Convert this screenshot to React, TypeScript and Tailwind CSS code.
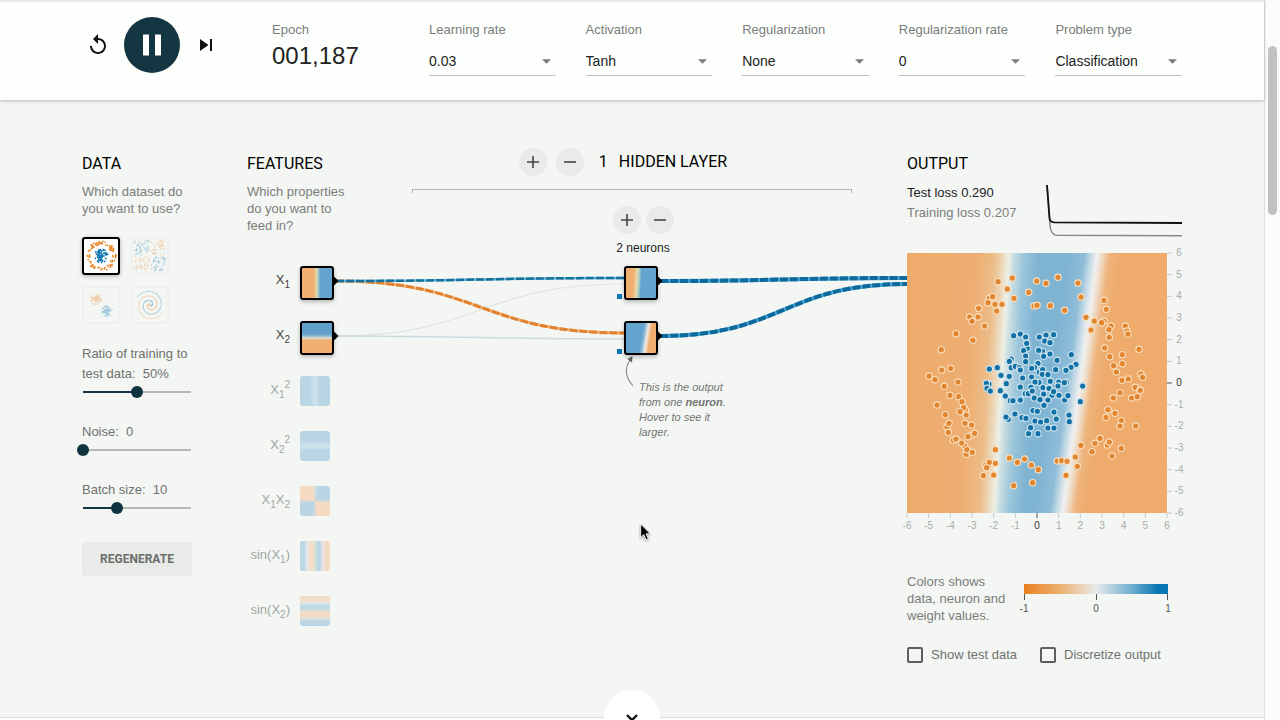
import React, { useState } from "react";

type Point = [number, number];

const ORANGE = "#e8872b";
const BLUE = "#0b75b1";

/* ---------- Header ---------- */

function Picker({ label, options }: { label: string; options: string[] }) {
  return (
    <label className="block min-w-0">
      <span className="block text-[13px] leading-5 text-[#7b7d7b]">{label}</span>
      <span className="relative mt-2 block">
        <select className="block h-[28px] w-full appearance-none rounded-none border-b border-[#bfc2bf] bg-transparent text-[14px] text-[#222] outline-none">
          {options.map((o) => (
            <option key={o}>{o}</option>
          ))}
        </select>
        <svg viewBox="0 0 10 5" className="pointer-events-none absolute top-[11px] right-[5px] h-[5px] w-[9px]">
          <path d="M0 0h10L5 5z" fill="#7b7d7b" />
        </svg>
      </span>
    </label>
  );
}

function Header() {
  return (
    <header className="relative z-10 h-[100px] shrink-0 border-t-2 border-[#e6e9e6] bg-[#fcfffc] shadow-[0_1px_3px_rgba(0,0,0,0.25)]">
      <div className="mx-auto flex max-w-[1100px]">
        <div className="mt-[15px] ml-1 flex h-14 w-[186px] shrink-0 items-center">
          <button aria-label="Reset" className="mr-[14px]">
            <svg viewBox="0 0 24 24" className="h-6 w-6" fill="#111">
              <path d="M12 5V1L7 6l5 5V7c3.31 0 6 2.69 6 6s-2.69 6-6 6-6-2.69-6-6H4c0 4.42 3.58 8 8 8s8-3.58 8-8-3.58-8-8-8z" />
            </svg>
          </button>
          <button aria-label="Pause" className="flex h-14 w-14 items-center justify-center rounded-full bg-[#143642]">
            <svg viewBox="0 0 24 24" className="h-9 w-9" fill="#fff">
              <path d="M6 19h4V5H6v14zm8-14v14h4V5h-4z" />
            </svg>
          </button>
          <button aria-label="Step" className="ml-[14px]">
            <svg viewBox="0 0 24 24" className="h-6 w-6" fill="#111">
              <path d="M6 18l8.5-6L6 6v12zM16 6v12h2V6h-2z" />
            </svg>
          </button>
        </div>
        <div className="mt-[18px] w-[157px] shrink-0">
          <div className="text-[13px] leading-5 text-[#7b7d7b]">Epoch</div>
          <div className="text-[24px] leading-8 text-[#222]">001,187</div>
        </div>
        <div className="mt-[18px] grid flex-1 grid-cols-5 gap-[30px]">
          <Picker label="Learning rate" options={["0.03", "0.1", "0.3"]} />
          <Picker label="Activation" options={["Tanh", "ReLU", "Sigmoid", "Linear"]} />
          <Picker label="Regularization" options={["None", "L1", "L2"]} />
          <Picker label="Regularization rate" options={["0", "0.001", "0.01"]} />
          <Picker label="Problem type" options={["Classification", "Regression"]} />
        </div>
      </div>
    </header>
  );
}

/* ---------- Data column ---------- */

function makeRandom(seed: number) {
  let s = seed;
  return () => {
    s = (s * 16807) % 2147483647;
    return s / 2147483647;
  };
}

type Dot = { x: number; y: number; c: string };

function circleDots(): Dot[] {
  const r = makeRandom(7);
  const out: Dot[] = [];
  for (let i = 0; i < 90; i++) {
    const a = r() * Math.PI * 2;
    const d = 11 + r() * 4;
    out.push({ x: 17 + Math.cos(a) * d, y: 17 + Math.sin(a) * d, c: ORANGE });
  }
  for (let i = 0; i < 75; i++) {
    const a = r() * Math.PI * 2;
    const d = r() * 7;
    out.push({ x: 17 + Math.cos(a) * d, y: 17 + Math.sin(a) * d, c: BLUE });
  }
  return out;
}

function xorDots(): Dot[] {
  const r = makeRandom(31);
  return Array.from({ length: 180 }, () => {
    const x = (r() - 0.5) * 29;
    const y = (r() - 0.5) * 29;
    return { x: 17 + x + Math.sign(x), y: 17 + y + Math.sign(y), c: x * y > 0 ? BLUE : ORANGE };
  });
}

function gaussDots(): Dot[] {
  const r = makeRandom(99);
  return Array.from({ length: 120 }, (_, i) => {
    const a = r() * Math.PI * 2;
    const d = r() * 5.5;
    const blue = i % 2 === 0;
    return {
      x: (blue ? 23 : 12) + Math.cos(a) * d,
      y: (blue ? 23 : 11) + Math.sin(a) * d,
      c: blue ? BLUE : ORANGE,
    };
  });
}

function spiralDots(): Dot[] {
  return Array.from({ length: 200 }, (_, i) => {
    const t = (i % 100) / 100;
    const blue = i < 100;
    const a = t * 10.5 + (blue ? 0 : Math.PI);
    return { x: 17 + Math.sin(a) * t * 15, y: 17 + Math.cos(a) * t * 15, c: blue ? BLUE : ORANGE };
  });
}

const DATASETS = [
  { name: "Circle", dots: circleDots(), size: 0.9 },
  { name: "Exclusive or", dots: xorDots(), size: 0.7 },
  { name: "Gaussian", dots: gaussDots(), size: 0.8 },
  { name: "Spiral", dots: spiralDots(), size: 0.6 },
];

function DatasetThumb({
  name,
  dots,
  size,
  active,
}: {
  name: string;
  dots: Dot[];
  size: number;
  active: boolean;
}) {
  return (
    <button
      aria-label={name}
      className={
        active
          ? "h-[38px] w-[38px] rounded-[3px] border-2 border-black bg-white shadow-[0_1px_4px_rgba(0,0,0,0.3)]"
          : "h-[38px] w-[38px] rounded-[3px] border-2 border-[#e6e9e6] opacity-35"
      }
    >
      <svg viewBox="0 0 34 34" className="h-[34px] w-[34px]">
        {dots.map((d, i) => (
          <circle key={i} cx={d.x} cy={d.y} r={size} fill={d.c} />
        ))}
      </svg>
    </button>
  );
}

function Slider({
  label,
  min,
  max,
  start,
  suffix = "",
}: {
  label: string;
  min: number;
  max: number;
  start: number;
  suffix?: string;
}) {
  const [value, setValue] = useState(start);
  const fill = `${((value - min) / (max - min)) * 100}%`;
  return (
    <label className="block text-[13px] leading-5 text-[#6f726f]">
      <span>{`${label}:\u00a0 ${value}${suffix}`}</span>
      <input
        type="range"
        min={min}
        max={max}
        value={value}
        onChange={(e) => setValue(Number(e.target.value))}
        style={{ "--fill": fill } as React.CSSProperties}
        className="-ml-[5px] block h-4 w-[calc(100%+10px)] appearance-none bg-transparent [&::-webkit-slider-runnable-track]:h-[2px] [&::-webkit-slider-runnable-track]:bg-[linear-gradient(to_right,transparent_6px,#143642_6px,#143642_var(--fill),#b4b7b4_var(--fill),#b4b7b4_calc(100%-6px),transparent_calc(100%-6px))] [&::-webkit-slider-thumb]:-mt-[5px] [&::-webkit-slider-thumb]:h-3 [&::-webkit-slider-thumb]:w-3 [&::-webkit-slider-thumb]:appearance-none [&::-webkit-slider-thumb]:rounded-full [&::-webkit-slider-thumb]:bg-[#0f3440]"
      />
    </label>
  );
}

function Title({ children }: { children: React.ReactNode }) {
  return <h2 className="font-[Roboto,sans-serif] text-[16px] leading-[22px] text-black">{children}</h2>;
}

function DataColumn() {
  return (
    <section className="pt-[6px]">
      <Title>DATA</Title>
      <p className="mt-2 text-[13px] leading-[17px] whitespace-nowrap text-[#7b7d7b]">
        Which dataset do
        <br />
        you want to use?
      </p>
      <div className="mt-5 grid grid-cols-[38px_38px] gap-[11px]">
        {DATASETS.map((d, i) => (
          <DatasetThumb key={d.name} name={d.name} dots={d.dots} size={d.size} active={i === 0} />
        ))}
      </div>
      <div className="mt-5 flex flex-col gap-[22px]">
        <Slider label="Ratio of training to test data" min={10} max={90} start={50} suffix="%" />
        <Slider label="Noise" min={0} max={50} start={0} />
        <Slider label="Batch size" min={1} max={30} start={10} />
      </div>
      <button className="mt-[26px] h-[34px] w-full rounded-[2px] bg-[#e8ebe8] font-[Roboto,sans-serif] text-[12px] font-bold text-[#6b6e6b]">
        REGENERATE
      </button>
    </section>
  );
}

/* ---------- Features column ---------- */

function FeatureRow({
  label,
  active = false,
  fill,
}: {
  label: React.ReactNode;
  active?: boolean;
  fill: string;
}) {
  return (
    <li className="flex h-[55px] items-start gap-[10px]">
      <span
        className={
          active
            ? "w-[43px] pt-1 text-right text-[13px] leading-5 whitespace-nowrap text-[#444]"
            : "w-[43px] pt-1 text-right text-[13px] leading-5 whitespace-nowrap text-[#a3a6a3]"
        }
      >
        {label}
      </span>
      <span
        className={
          active
            ? `h-[34px] w-[34px] shrink-0 rounded-[3px] border-2 border-black shadow-[0_2px_4px_rgba(0,0,0,0.25)] ${fill}`
            : `h-[30px] w-[30px] shrink-0 overflow-hidden rounded-[3px] ${fill}`
        }
      />
    </li>
  );
}

function Sub({ n }: { n: number }) {
  return <span className="relative top-1 text-[10px] leading-none">{n}</span>;
}

function Sup() {
  return <span className="relative -top-[6px] text-[10px] leading-none">2</span>;
}

function FeaturesColumn() {
  return (
    <section className="pt-[6px]">
      <Title>FEATURES</Title>
      <p className="mt-2 text-[13px] leading-[17px] whitespace-nowrap text-[#7b7d7b]">
        Which properties
        <br />
        do you want to
        <br />
        feed in?
      </p>
      <ul className="mt-8">
        <FeatureRow
          active
          label={<>X<Sub n={1} /></>}
          fill="bg-[linear-gradient(to_right,#f0ae70_38%,#dcdcb0_50%,#8fbdc4_56%,#64a5cf_62%)]"
        />
        <FeatureRow
          active
          label={<>X<Sub n={2} /></>}
          fill="bg-[linear-gradient(to_bottom,#5f9fca_35%,#8fbdd4_44%,#e6dccb_50%,#f0ae70_58%)]"
        />
        <FeatureRow
          label={<>X<Sub n={1} /><Sup /></>}
          fill="bg-[linear-gradient(to_right,#bad6e5_35%,#cbe2ea_45%,#cbe2ea_55%,#bad6e5_65%)]"
        />
        <FeatureRow
          label={<>X<Sub n={2} /><Sup /></>}
          fill="bg-[linear-gradient(to_bottom,#bad6e5_35%,#cbe2ea_45%,#cbe2ea_55%,#bad6e5_65%)]"
        />
        <FeatureRow
          label={<>X<Sub n={1} />X<Sub n={2} /></>}
          fill="bg-[conic-gradient(#c9dfe6_2%,#bad6e5_5%,#bad6e5_22%,#f5dac2_28%,#f5dac2_47%,#bad6e5_53%,#bad6e5_72%,#f5dac2_78%,#f5dac2_95%,#dfe5dc_100%)]"
        />
        <FeatureRow
          label={<>sin(X<Sub n={1} />)</>}
          fill="bg-[linear-gradient(to_right,#bad9e5_14%,#e9e9ee_25%,#f5dcc6_34%,#f2dfc6_43%,#d5e2d2_50%,#bad6e5_58%,#bad6e5_66%,#ebe6e6_76%,#f5dac2_86%)]"
        />
        <FeatureRow
          label={<>sin(X<Sub n={2} />)</>}
          fill="bg-[linear-gradient(to_bottom,#f3dcc6_14%,#dce6e8_25%,#b8d7e4_34%,#c5dde3_43%,#ecdfd0_52%,#f5dac2_64%,#e6e3dc_74%,#bad6e5_84%)]"
        />
      </ul>
    </section>
  );
}

/* ---------- Network ---------- */

function RoundButton({ label, minus = false }: { label: string; minus?: boolean }) {
  return (
    <button aria-label={label} className="flex h-7 w-7 items-center justify-center rounded-full bg-[#e8ebe8]">
      <svg viewBox="0 0 12 12" className="h-3 w-3" stroke="#444744" strokeWidth="1.6">
        <path d={minus ? "M0 6h12" : "M0 6h12M6 0v12"} />
      </svg>
    </button>
  );
}

function Link({ d, width, base, dash }: { d: string; width: number; base: string; dash: string }) {
  return (
    <g fill="none">
      <path d={d} stroke={base} strokeWidth={width} />
      <path d={d} stroke={dash} strokeWidth={width} strokeDasharray="8 2" />
    </g>
  );
}

function Network() {
  return (
    <section className="pt-px">
      <div className="flex h-7 items-center justify-center gap-[9px] pr-[18px] font-[Roboto,sans-serif] text-[16px] text-black">
        <RoundButton label="Add layer" />
        <RoundButton label="Remove layer" minus />
        <span className="ml-[6px]">1</span>
        <span className="ml-[2px] whitespace-nowrap">HIDDEN LAYER</span>
      </div>
      <div className="mt-[13px] h-1 border-x border-t border-[#b4b7b4]" />
      <div className="mt-[13px] flex justify-center gap-[5px] pl-[23px]">
        <RoundButton label="Add neuron" />
        <RoundButton label="Remove neuron" minus />
      </div>
      <div className="mt-[6px] pl-[22px] text-center text-[12px] leading-4 text-[#222]">2 neurons</div>

      <div className="relative mt-[10px] h-[180px]">
        <svg viewBox="0 0 440 180" className="absolute top-0 left-0 h-[180px] w-[440px] overflow-visible">
          <path d="M-76 70C68 70 68 18 212 18" fill="none" stroke="#e1e5e1" strokeWidth="1.2" />
          <path d="M-76 70C68 70 68 73 212 73" fill="none" stroke="#c9dbdf" strokeWidth="1.4" />
          <Link d="M-76 15C68 15 68 67 212 67" width={3} base="#f3b57c" dash="#e0822f" />
          <Link d="M-76 15C68 15 68 12 212 12" width={2.5} base="#6cb4d8" dash="#14719c" />
          <Link d="M248 15C371 15 371 12 495 12" width={4} base="#4aa5d8" dash="#0f6a9c" />
          <Link d="M248 70C371 70 371 18 495 18" width={4} base="#4aa5d8" dash="#0f6a9c" />
          <g fill="#000">
            <path d="M-78 10.500L-73.500 15L-78 19.500z" />
            <path d="M-78 65.500L-73.500 70L-78 74.500z" />
            <path d="M246 10.500L250.500 15L246 19.500z" />
            <path d="M246 65.500L250.500 70L246 74.500z" />
          </g>
          <rect x="205" y="28" width="5" height="5" fill="#0b75b1" />
          <rect x="205" y="83" width="5" height="5" fill="#0b75b1" />
          <path d="M221 120C214 112 212 103 218 94" fill="none" stroke="#8a8d8a" strokeWidth="1.1" />
          <path d="M220.500 90L220 96.500L215.500 93z" fill="#5e615e" />
        </svg>
        <div className="absolute top-0 left-[212px] h-[34px] w-[34px] rounded-[3px] border-2 border-black bg-[linear-gradient(93deg,#f0ae70_24%,#e6d8a8_36%,#b9d3c4_42%,#64a5cf_50%)] shadow-[0_2px_4px_rgba(0,0,0,0.25)]" />
        <div className="absolute top-[55px] left-[212px] h-[34px] w-[34px] rounded-[3px] border-2 border-black bg-[linear-gradient(99deg,#64a5cf_52%,#a3c6dc_60%,#f2ece6_66%,#f0ae70_76%)] shadow-[0_2px_4px_rgba(0,0,0,0.25)]" />
        <p className="absolute top-[114px] left-[227px] text-[11px] leading-[15px] whitespace-nowrap text-[#747774] italic">
          This is the output
          <br />
          from one <b>neuron</b>.
          <br />
          Hover to see it
          <br />
          larger.
        </p>
      </div>
    </section>
  );
}

/* ---------- Output ---------- */

type Quadrant = { dx: number; dy: number; orange: Point[]; blue: Point[] };

/* Sample positions in thirds of a pixel, grouped by quadrant of the plot. */
const QUADRANTS: Quadrant[] = [
  {
    dx: -21,
    dy: -24,
    orange: [
      [294, 110], [337, 99], [322, 132], [386, 142], [342, 160], [268, 160], [278, 155], [264, 173],
      [285, 178], [306, 178], [290, 198], [236, 190], [209, 216], [234, 216], [216, 229], [254, 243],
      [168, 266], [219, 286], [124, 314], [125, 375], [152, 370], [87, 393], [105, 404], [174, 411],
      [133, 424],
    ],
    blue: [
      [341, 272], [361, 267], [377, 276], [382, 310], [380, 295], [371, 317], [377, 333], [377, 350],
      [334, 342], [328, 349], [334, 368], [346, 364], [359, 368], [361, 375], [268, 372], [292, 368],
      [303, 391], [328, 394], [368, 399], [319, 416], [267, 417], [259, 415], [261, 430], [361, 426],
      [303, 436],
    ],
  },
  {
    dx: 369,
    dy: -24,
    orange: [
      [20, 108], [48, 115], [84, 97], [144, 114], [153, 156], [12, 183], [21, 181], [61, 182],
      [104, 196], [168, 217], [222, 166], [229, 193], [193, 228], [183, 255], [222, 228], [215, 233],
      [243, 243], [237, 254], [238, 277], [286, 243], [291, 258], [294, 267], [224, 309], [327, 313],
      [239, 335], [277, 329], [277, 356], [251, 362], [259, 381], [333, 387], [338, 397], [276, 406],
      [295, 402], [316, 427], [330, 435],
    ],
    blue: [
      [28, 276], [48, 270], [71, 269], [44, 288], [60, 293], [38, 320], [26, 316], [60, 327],
      [41, 334], [81, 346], [124, 329], [138, 358], [123, 367], [108, 376], [77, 374], [24, 355],
      [14, 368], [5, 370], [28, 382], [38, 374], [37, 388], [54, 389], [5, 396], [61, 409],
      [86, 411], [109, 411], [103, 413], [27, 412], [15, 411], [3, 427], [39, 428], [57, 430],
      [84, 423], [158, 423],
    ],
  },
  {
    dx: -21,
    dy: 396,
    orange: [
      [150, 31], [176, 35], [186, 50], [111, 60], [197, 75], [191, 68], [180, 80], [199, 90],
      [136, 89], [195, 115], [141, 126], [147, 115], [215, 120], [145, 142], [211, 152], [224, 145],
      [204, 155], [160, 166], [168, 162], [194, 182], [185, 174], [198, 208], [201, 194], [217, 202],
      [286, 194], [286, 235], [257, 240], [265, 242], [268, 232], [260, 248], [250, 272], [281, 270],
      [328, 219], [352, 232], [374, 222], [341, 302],
    ],
    blue: [
      [271, 18], [301, 17], [316, 33], [331, 47], [339, 47], [361, 45], [376, 26], [385, 26],
      [345, 87], [325, 103], [318, 96], [366, 98], [378, 100], [386, 146],
    ],
  },
  {
    dx: 369,
    dy: 396,
    orange: [
      [331, 16], [270, 23], [250, 39], [305, 39], [322, 35], [234, 74], [255, 85], [228, 97],
      [274, 107], [270, 123], [317, 123], [210, 160], [195, 175], [153, 181], [186, 200], [232, 180],
      [238, 171], [274, 190], [246, 213], [136, 216], [82, 228], [95, 227], [111, 229], [142, 244],
      [108, 271], [4, 240], [25, 254], [8, 293],
    ],
    blue: [
      [7, 18], [57, 10], [66, 31], [71, 20], [41, 27], [13, 39], [30, 44], [54, 45], [87, 31],
      [104, 45], [114, 32], [151, 50], [42, 61], [9, 77], [22, 79], [72, 81], [117, 90], [79, 102],
      [118, 110], [15, 108], [32, 111], [50, 107], [54, 129], [72, 129], [2, 128], [24, 146],
    ],
  },
];

const TICKS = Array.from({ length: 13 }, (_, i) => i - 6);

function Heatmap() {
  return (
    <svg viewBox="0 0 275 285" className="mt-[13px] block h-[285px] w-[275px] overflow-visible">
      <defs>
        <linearGradient id="leftEdge" gradientUnits="userSpaceOnUse" x1="0" y1="130" x2="147" y2="138.500">
          <stop offset="0" stopColor="#eeab6b" />
          <stop offset="0.42" stopColor="#eeae72" />
          <stop offset="0.54" stopColor="#ecbc88" />
          <stop offset="0.6" stopColor="#ecd8ba" />
          <stop offset="0.64" stopColor="#edf0e6" />
          <stop offset="0.68" stopColor="#c5dbe0" />
          <stop offset="0.74" stopColor="#9cc6db" />
          <stop offset="0.84" stopColor="#7fb4d3" />
        </linearGradient>
        <linearGradient id="rightEdge" gradientUnits="userSpaceOnUse" x1="142" y1="130" x2="202" y2="138">
          <stop offset="0.04" stopColor="#7fb4d3" />
          <stop offset="0.3" stopColor="#8fbdd8" />
          <stop offset="0.43" stopColor="#cfdfe8" />
          <stop offset="0.51" stopColor="#eff0ef" />
          <stop offset="0.6" stopColor="#f0d9c0" />
          <stop offset="0.71" stopColor="#eeb47c" />
          <stop offset="0.9" stopColor="#eeab6b" />
        </linearGradient>
      </defs>
      <rect width="260" height="260" fill="url(#leftEdge)" />
      <path d="M152 0H260V260H122z" fill="url(#rightEdge)" />
      <g transform="scale(0.3333)" strokeWidth="3.5">
        {QUADRANTS.map((q, i) => (
          <g key={i} transform={`translate(${q.dx} ${q.dy})`}>
            {q.orange.map(([x, y], k) => (
              <circle key={`o${k}`} cx={x} cy={y} r="9.500" fill="#e2852f" stroke="#f8dfbf" />
            ))}
            {q.blue.map(([x, y], k) => (
              <circle key={`b${k}`} cx={x} cy={y} r="9.500" fill="#1171a6" stroke="#cfe4ee" />
            ))}
          </g>
        ))}
      </g>
      <g fontSize="10" textAnchor="middle">
        {TICKS.map((t) => {
          const p = ((t + 6) * 260) / 12;
          const color = t === 0 ? "#333" : "#a9aca9";
          return (
            <g key={t} fill={color}>
              <path d={`M${p} 260v5`} stroke={t === 0 ? "#555" : "#c6c9c6"} />
              <text x={p} y={276}>{t}</text>
              <path d={`M260 ${260 - p}h5`} stroke={t === 0 ? "#555" : "#c6c9c6"} />
              <text x={272} y={263 - p}>{t}</text>
            </g>
          );
        })}
      </g>
    </svg>
  );
}

function CheckOption({ label }: { label: string }) {
  return (
    <label className="flex items-center gap-2 text-[13px] leading-5 whitespace-nowrap text-[#6f726f]">
      <input
        type="checkbox"
        className="h-4 w-4 appearance-none rounded-[2px] border-2 border-[#5c5f5c] checked:bg-[#143642]"
      />
      {label}
    </label>
  );
}

function OutputColumn() {
  return (
    <section className="pt-[6px]">
      <Title>OUTPUT</Title>
      <div className="mt-2 flex h-[57px] justify-between">
        <div className="text-[13px] leading-5 whitespace-nowrap">
          <div className="text-[#222]">Test loss 0.290</div>
          <div className="text-[#7b7d7b]">Training loss 0.207</div>
        </div>
        <svg viewBox="0 0 137 57" className="h-[57px] w-[137px]" fill="none">
          <path d="M2 2L5 43Q6 52 12 52.300L137 52.800" stroke="#858885" strokeWidth="1.500" />
          <path d="M2 2L4.500 35Q5 39 9 39.300L137 40" stroke="#111" strokeWidth="1.800" />
        </svg>
      </div>
      <Heatmap />
      <div className="mt-[35px] flex justify-between pr-[14px]">
        <p className="text-[13px] leading-[17px] whitespace-nowrap text-[#7b7d7b]">
          Colors shows
          <br />
          data, neuron and
          <br />
          weight values.
        </p>
        <svg viewBox="0 0 150 40" className="mt-[11px] h-10 w-[150px] overflow-visible">
          <defs>
            <linearGradient id="scale">
              <stop offset="0" stopColor="#e8801f" />
              <stop offset="0.25" stopColor="#edb06f" />
              <stop offset="0.5" stopColor="#e8eaeb" />
              <stop offset="0.75" stopColor="#6fadd0" />
              <stop offset="0.93" stopColor="#0877b3" />
            </linearGradient>
          </defs>
          <rect x="6" width="144" height="10" fill="url(#scale)" />
          <path d="M6.500 10v6M78.500 10v6M149.500 10v6" stroke="#555" />
          <g fontSize="10" textAnchor="middle" fill="#555">
            <text x="6" y="28">-1</text>
            <text x="78" y="28">0</text>
            <text x="150" y="28">1</text>
          </g>
        </svg>
      </div>
      <div className="mt-[21px] flex gap-[23px]">
        <CheckOption label="Show test data" />
        <CheckOption label="Discretize output" />
      </div>
    </section>
  );
}

/* ---------- Page ---------- */

export default function App() {
  return (
    <div className="flex h-screen overflow-hidden bg-[#f3f6f3] font-['Liberation_Sans',Arial,sans-serif]">
      <div className="relative flex min-w-0 flex-1 flex-col">
        <Header />
        <main className="min-h-0 flex-1 pt-[47px]">
          <div className="mx-auto grid max-w-[1100px] grid-cols-[2fr_2fr_8fr_5fr] gap-[55px] [&>*]:min-w-0">
            <DataColumn />
            <FeaturesColumn />
            <Network />
            <OutputColumn />
          </div>
        </main>
        <div className="h-[3px] shrink-0 border-t border-[#dcdfdc] bg-[#fcfffc]" />
        <button
          aria-label="Scroll down"
          className="absolute -bottom-[26px] left-1/2 flex h-14 w-14 -translate-x-1/2 justify-center rounded-full bg-white pt-4"
        >
          <svg viewBox="0 0 24 24" className="h-6 w-6" fill="none" stroke="#111" strokeWidth="2.4">
            <path d="M7 9l5 5 5-5" />
          </svg>
        </button>
        <svg
          viewBox="0 0 12 19"
          className="pointer-events-none absolute top-[523px] left-[640px] h-[19px] w-3 drop-shadow-[0_1px_1px_rgba(0,0,0,0.4)]"
        >
          <path
            d="M0.700 1V14.500L3.800 11.600L6 16.800L8.300 15.800L6.100 10.800H10.300z"
            fill="#000"
            stroke="#fff"
            strokeWidth="0.900"
          />
        </svg>
      </div>
      <div className="w-4 shrink-0 border-l border-[#dfe2df] bg-[#f9fcf9] px-[3px]">
        <div className="mt-[46px] h-[169px] rounded-full bg-[#bfc2bf]" />
      </div>
    </div>
  );
}
